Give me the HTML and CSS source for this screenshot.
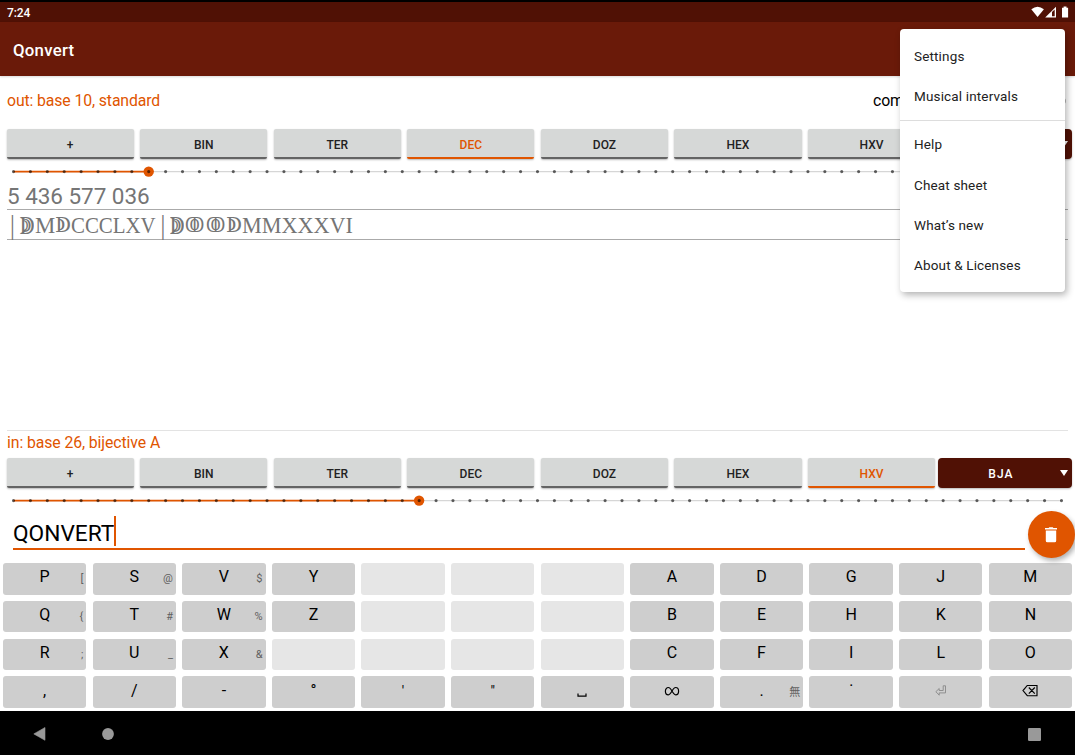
FILE: index.html
```html
<!DOCTYPE html>
<html lang="en">
<head>
<meta charset="utf-8">
<title>Qonvert</title>
<link rel="stylesheet" href="styles.css">
</head>
<body>
<div class="app">
  <div class="status-bar">
    <span>7:24</span>
    <svg class="status-icons" width="38" height="12" viewBox="0 0 38 12">
      <path d="M.3 3.200Q6.600-1.800 12.900 3.200L6.600 11Z" fill="#fff"/>
      <path d="M14.200 11.500L25 .7V11.500Z" fill="#fff"/>
      <path d="M21 6L23.700 3.400V10.200H21Z" fill="#501105"/>
      <path d="M31 1.700h1.600V.4h2.900v1.300h1.600V11.500H31Z" fill="#fff"/>
    </svg>
  </div>
  <header class="app-bar">Qonvert</header>

  <section class="output">
    <div class="out-label"><span class="accent">out: base 10, standard</span><span class="complement">com<i class="switch"></i></span></div>
    <div class="bases">
      <button class="base">+</button><button class="base">BIN</button><button class="base">TER</button><button class="base selected">DEC</button><button class="base">DOZ</button><button class="base">HEX</button><button class="base">HXV</button>
      <button class="system"><i class="arrow"></i></button>
    </div>
    <svg class="slider" width="1075" height="24" viewBox="0 0 1075 24">
      <path class="track" d="M13.500 12.600H1061.500"/>
      <path class="progress" d="M13.500 12.600H148.700"/>
      <circle class="thumb" cx="148.700" cy="12.600" r="5.200"/>
      <path class="ticks" d="M13.500 12.600H1062"/>
    </svg>
    <div class="result number">5 436 577 036</div>
    <div class="result roman"><span class="bar">|</span><span class="d50k">ↇ</span><span class="m">M</span><span class="d5k">ↁ</span><span class="tail1">CCCLXV</span><span class="bar">|</span><span class="d50k">ↇ</span><span class="d10k">ↂ</span><span class="d10k">ↂ</span><span class="d5k">ↁ</span><span class="tail2">MMXXXVI</span></div>
  </section>

  <section class="input">
    <div class="in-label accent">in: base 26, bijective A</div>
    <div class="bases">
      <button class="base">+</button><button class="base">BIN</button><button class="base">TER</button><button class="base">DEC</button><button class="base">DOZ</button><button class="base">HEX</button><button class="base selected">HXV</button>
      <button class="system">BJA<i class="arrow"></i></button>
    </div>
    <svg class="slider" width="1075" height="24" viewBox="0 0 1075 24">
      <path class="track" d="M13.500 12.600H1061.500"/>
      <path class="progress" d="M13.500 12.600H419.100"/>
      <circle class="thumb" cx="419.100" cy="12.600" r="5.200"/>
      <path class="ticks" d="M13.500 12.600H1062"/>
    </svg>
    <div class="entry-row">
      <div class="entry"><span>QONVERT</span><i class="caret"></i></div>
      <button class="clear" aria-label="Clear">
        <svg width="12" height="16" viewBox="0 0 12 16"><path d="M0 1h3.600L4.300 .3h3.400L8.400 1H12v1.500H0zM.8 3.500h10.400v10.200q0 1.600-1.600 1.600H2.400Q.8 15.300.8 13.700z" fill="#fff"/></svg>
      </button>
    </div>
  </section>

  <div class="keyboard">
    <button class="key">P<small>[</small></button><button class="key">S<small>@</small></button><button class="key">V<small>$</small></button><button class="key">Y</button><button class="key off"></button><button class="key off"></button><button class="key off"></button><button class="key">A</button><button class="key">D</button><button class="key">G</button><button class="key">J</button><button class="key">M</button>
    <button class="key">Q<small>{</small></button><button class="key">T<small>#</small></button><button class="key">W<small>%</small></button><button class="key">Z</button><button class="key off"></button><button class="key off"></button><button class="key off"></button><button class="key">B</button><button class="key">E</button><button class="key">H</button><button class="key">K</button><button class="key">N</button>
    <button class="key">R<small>;</small></button><button class="key">U<small>_</small></button><button class="key">X<small>&amp;</small></button><button class="key off"></button><button class="key off"></button><button class="key off"></button><button class="key off"></button><button class="key">C</button><button class="key">F</button><button class="key">I</button><button class="key">L</button><button class="key">O</button>
    <button class="key">,</button><button class="key">/</button><button class="key">-</button><button class="key">°</button><button class="key thin">'</button><button class="key thin">"</button>
    <button class="key" aria-label="Space"><svg width="10" height="12" viewBox="0 0 10 12"><path d="M1 8.500v2.700h8V8.500" fill="none" stroke="#000" stroke-width="1.200"/></svg></button>
    <button class="key" aria-label="Infinity"><svg width="16" height="12" viewBox="0 0 16 12"><path d="M8 6C6.700 3.600 5.700 2.500 4.400 2.500 2.600 2.500 1.400 4 1.400 6.200s1.200 3.600 3 3.600C5.700 9.800 6.700 8.400 8 6S10.300 2.500 11.600 2.500c1.800 0 3 1.500 3 3.700s-1.200 3.600-3 3.600C10.300 9.800 9.300 8.400 8 6Z" fill="none" stroke="#000" stroke-width="1.200"/></svg></button>
    <button class="key">.<small class="cjk">無</small></button><button class="key">˙</button>
    <button class="key" aria-label="Enter"><svg width="12" height="12" viewBox="0 0 12 12"><path d="M8.200 .8h2.300v7.100H4.200v2.300L.9 6.700l3.300-3.200v2h4z" fill="none" stroke="#888" stroke-width=".9"/></svg></button>
    <button class="key" aria-label="Backspace"><svg width="16" height="12" viewBox="0 0 16 12"><path d="M5.300 .5H15v10.200H5.300L1 5.600zM6.800 2.500l6 6.200M12.800 2.500l-6 6.200" fill="none" stroke="#000" stroke-width="1.150"/></svg></button>
  </div>

  <nav class="nav-bar">
    <svg width="14" height="14" viewBox="0 0 14 14"><path d="M.8 6.900L12 .5V13.300Z" fill="#999" stroke="#999" stroke-width=".6" stroke-linejoin="round"/></svg>
    <svg class="home" width="12" height="12" viewBox="0 0 12 12"><circle cx="6" cy="6" r="5.900" fill="#999"/></svg>
    <svg class="recent" width="13" height="13" viewBox="0 0 13 13"><rect width="13" height="13" rx="1.200" fill="#999"/></svg>
  </nav>

  <div class="menu">
    <div class="item">Settings</div><div class="item">Musical intervals</div>
    <div class="divider"></div>
    <div class="item">Help</div><div class="item">Cheat sheet</div><div class="item">What’s new</div><div class="item">About &amp; Licenses</div>
  </div>
</div>
</body>
</html>
```
FILE: styles.css
```css
* { box-sizing: border-box; }
body { margin: 0; font-family: Roboto, sans-serif; background: #fff; }
button { border: 0; padding: 0; margin: 0; font-family: inherit; color: inherit; }
.app { position: relative; width: 1075px; height: 755px; display: flex; flex-direction: column; overflow: hidden; }
.status-bar { height: 22px; flex: none; border-top: 2px solid #000; background: #501105; color: #fff; font-size: 12px; font-weight: 500; letter-spacing: -.1px; display: flex; justify-content: space-between; align-items: center; padding: 1px 6px 0 7px; }
.status-icons { display: block; margin-top: -1px; }
.app-bar { height: 54px; flex: none; background: #6a1a09; color: #fff; font-size: 16.800px; font-weight: 500; line-height: 56px; padding-left: 13px; letter-spacing: .25px; box-shadow: 0 1px 2px rgba(0,0,0,.15); }
.accent { color: #e05500; }
.output { height: 354px; flex: none; }
.out-label { height: 53px; display: flex; justify-content: space-between; padding: 0 9px 0 7px; font-size: 15.800px; letter-spacing: -.11px; line-height: 49px; }
.complement { width: 193px; display: flex; justify-content: space-between; align-items: center; height: 49px; }
.switch { width: 22px; height: 6px; border-radius: 3px; background: #bbb; }
.bases { height: 30px; display: flex; gap: 6.400px; padding: 0 3.500px 0 6.500px; }
.base, .system { height: 30px; font-size: 12px; font-weight: 500; border-radius: 2px; box-shadow: 0 1px 2px rgba(0,0,0,.28); }
.base { width: 127.200px; flex: none; background: #d6d8d7; color: #222; border-bottom: 2px solid #646464; padding-top: 3px; }
.base.selected { color: #e05500; border-bottom-color: #e05500; }
.system { flex: 1; margin-left: -3.200px; background: #501105; color: #fff; border-radius: 4px; letter-spacing: 1.100px; position: relative; padding: 2px 8px 0 0; }
.arrow { position: absolute; right: 3.500px; top: 12px; border: 4.500px solid transparent; border-top: 6px solid #fff; border-bottom: 0; }
.slider { display: block; }
.slider path { fill: none; }
.slider .track { stroke: #d6d6d6; stroke-width: 1.200; }
.slider .progress { stroke: #e05500; stroke-width: 1.700; }
.thumb { fill: #e05500; }
.ticks { stroke: rgba(0,0,0,.6); stroke-width: 3.200; stroke-linecap: round; stroke-dasharray: 0 16.903; }
.result { margin: 0 7px; border-bottom: 1px solid #aaa; color: #757575; white-space: nowrap; }
.number { height: 27px; font-size: 22.500px; line-height: 26px; letter-spacing: -.04px; }
.roman { height: 30px; display: flex; font-family: "Liberation Serif", serif; font-size: 24px; line-height: 31px; padding-left: 3px; }
.roman span { flex: none; transform-origin: left center; }
.roman .bar { width: 9.500px; transform: scaleY(1.150); }
.roman .m { width: 20.500px; transform: scaleX(.95); }
.roman .d50k, .roman .d5k, .roman .d10k { font-family: "DejaVu Serif", serif; font-size: 20px; }
.roman .d50k { width: 15px; transform: scaleY(1.250); }
.roman .d5k { width: 15.500px; }
.roman .d10k { width: 20.500px; transform: scaleX(.8); }
.roman .tail1 { width: 90px; transform: scaleX(.87); }
.roman .tail2 { transform: scaleX(.925); }
.input { flex: none; height: 130px; }
.in-label { height: 28px; margin: 0 7px; border-top: 1px solid #e3e3e3; font-size: 15.800px; letter-spacing: -.09px; line-height: 23px; }
.entry-row { display: flex; height: 48px; }
.entry { width: 1012px; margin: 0 2px 0 13px; height: 38px; border-bottom: 2px solid #e05500; font-size: 22.700px; line-height: 43px; display: flex; }
.caret { width: 2px; height: 30px; margin-top: 4px; background: #e05500; }
.clear { width: 47px; height: 47px; margin: -1px 0 0 1px; border-radius: 50%; background: #e05500; box-shadow: 2px 3px 5px rgba(0,0,0,.3); display: grid; place-items: center; flex: none; z-index: 1; }
.clear svg { margin-right: 1px; }
.keyboard { flex: none; height: 151px; display: grid; grid-template-columns: repeat(12, 1fr); grid-template-rows: repeat(4, 31.700px); gap: 6.100px 6.300px; padding: 3px 3px 0; }
.key { position: relative; background: #cecece; border-radius: 3px; color: #000; font-size: 16px; line-height: 20px; padding: 0 0 3px; display: flex; align-items: center; justify-content: center; }
.key.off { background: #e6e6e6; }
.key small { position: absolute; right: 3px; top: 7px; font-size: 11px; line-height: 18px; color: #606060; }
.key .cjk { font-family: "Noto Sans CJK JP", sans-serif; top: 6px; }
.key.thin { font-size: 14px; }
.nav-bar { flex: 1; background: #000; display: flex; align-items: center; padding: 2px 34px 0 33px; }
.home { margin-left: 54.500px; }
.recent { margin-left: auto; }
.menu { position: absolute; left: 900px; top: 29px; width: 165px; height: 263px; background: #fff; border-radius: 4px; padding-top: 8.200px; box-shadow: 2px 3px 7px rgba(0,0,0,.3); z-index: 2; }
.item { height: 40.300px; line-height: 39.400px; padding-left: 14px; font-size: 13.500px; letter-spacing: .15px; color: #222; }
.divider { height: 1px; margin: 2.300px 0 4.200px; background: #ddd; }
```
